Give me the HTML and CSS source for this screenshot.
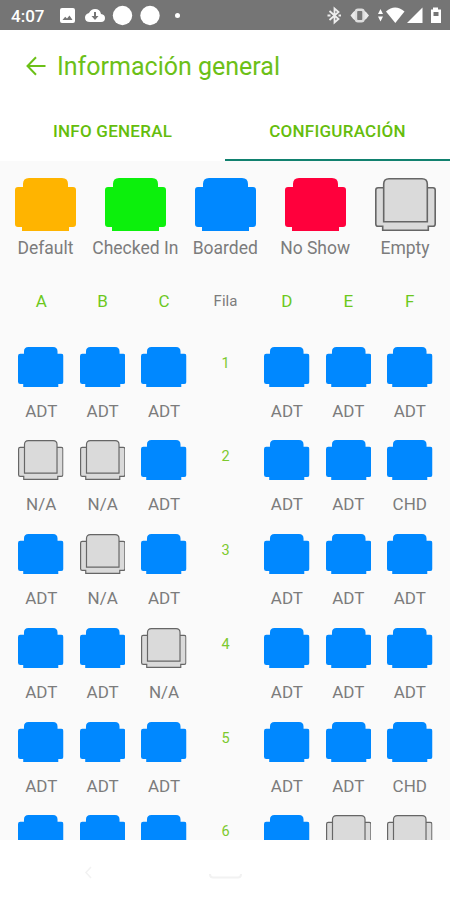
FILE: index.html
```
<!DOCTYPE html>
<html lang="es">
<head>
<meta charset="utf-8">
<title>Información general</title>
<link rel="stylesheet" href="styles.css">
</head>
<body>
<svg class="defs" aria-hidden="true">
  <symbol id="seat" viewBox="0 0 61 53" preserveAspectRatio="none">
    <path fill="currentColor" d="M8 9V6Q8 0 14 0H47Q53 0 53 6V9H58Q61 9 61 12V46Q61 49 58 49H54V53H7V49H3Q0 49 0 46V12Q0 9 3 9Z"/>
  </symbol>
  <symbol id="empty" viewBox="0 0 61 53" preserveAspectRatio="none">
    <g fill="#dadada" stroke="#666" stroke-width="1.6">
      <path d="M8.700 9.700H3Q.8 9.700 .8 12V46Q.8 48.300 3 48.300H7.700V52.200H53.300V48.300H58Q60.200 48.300 60.200 46V12Q60.200 9.700 58 9.700H52.300"/>
      <path d="M8.700 6Q8.700 .8 14 .8H47Q52.300 .8 52.300 6V43.800H8.700Z"/>
    </g>
  </symbol>
</svg>
<header class="status">
  <span class="clock">4:07</span>
  <svg class="status-icons" viewBox="0 0 390 30">
    <g fill="#fff">
      <path fill-rule="evenodd" d="M2 8H13Q15 8 15 10V21Q15 23 13 23H2Q0 23 0 21V10Q0 8 2 8ZM2.500 20H12.500L9.500 15.500L7 18.500L5.200 16.800Z"/>
      <path fill-rule="evenodd" d="M30 22Q25 22 25 17.500Q25 14 29 13Q31 9 35 9Q40 9 41 14Q45 14.500 45 18Q45 22 41 22ZM34 12V16H31.500L35 20L38.500 16H36V12Z"/>
      <circle cx="62.500" cy="15.500" r="9.700"/><circle cx="90" cy="15.500" r="9.700"/><circle cx="117.500" cy="15.500" r="2.500"/>
      <path d="M290.500 15.500Q293 11.500 296 10V21Q293 19.500 290.500 15.500ZM303 10Q306.500 11.500 309 15.500Q306.500 19.500 303 21Z" opacity=".85"/>
      <path d="M318 14L320.500 9L323 14ZM318 16.500H323L320.500 21.500Z"/>
      <path d="M326 11.500Q335 3.500 344.500 11.500L335.300 23Z"/>
      <path d="M362.500 7.500V23H347Z"/>
      <path fill-rule="evenodd" d="M373 7.500H378V9.500H381V23H371V9.500H373ZM373.500 12V16H378.500V12Z"/>
    </g>
    <path d="M269.500 11L278.500 19L274.500 22.500V8.500L278.500 12L269.500 20M267.500 15.500H270.500M278.500 15.500H281" fill="none" stroke="#eee" stroke-width="1.800"/>
    <rect x="296" y="9.700" width="7.500" height="11.600" rx="2" fill="#777" stroke="#ddd" stroke-width="2.400"/>
  </svg>
</header>
<div class="title">
  <svg class="back" viewBox="0 0 20 20"><path d="M19.500 10H2M10 1.200L1.500 10L10 18.800" fill="none" stroke="currentColor" stroke-width="2"/></svg>
  <h1>Información general</h1>
</div>
<nav class="tabs"><span class="tab">INFO GENERAL</span><span class="tab active">CONFIGURACIÓN</span></nav>
<main class="content">
  <section class="legend">
    <div class="key default"><svg><use href="#seat"/></svg><span>Default</span></div>
    <div class="key checked"><svg><use href="#seat"/></svg><span>Checked In</span></div>
    <div class="key boarded"><svg><use href="#seat"/></svg><span>Boarded</span></div>
    <div class="key noshow"><svg><use href="#seat"/></svg><span>No Show</span></div>
    <div class="key"><svg><use href="#empty"/></svg><span>Empty</span></div>
  </section>
  <section class="row heads"><b>A</b><b>B</b><b>C</b><span>Fila</span><b>D</b><b>E</b><b>F</b></section>
  <section class="row">
    <div class="seat"><svg><use href="#seat"/></svg>ADT</div>
    <div class="seat"><svg><use href="#seat"/></svg>ADT</div>
    <div class="seat"><svg><use href="#seat"/></svg>ADT</div>
    <span class="num">1</span>
    <div class="seat"><svg><use href="#seat"/></svg>ADT</div>
    <div class="seat"><svg><use href="#seat"/></svg>ADT</div>
    <div class="seat"><svg><use href="#seat"/></svg>ADT</div>
  </section>
  <section class="row">
    <div class="seat"><svg><use href="#empty"/></svg>N/A</div>
    <div class="seat"><svg><use href="#empty"/></svg>N/A</div>
    <div class="seat"><svg><use href="#seat"/></svg>ADT</div>
    <span class="num">2</span>
    <div class="seat"><svg><use href="#seat"/></svg>ADT</div>
    <div class="seat"><svg><use href="#seat"/></svg>ADT</div>
    <div class="seat"><svg><use href="#seat"/></svg>CHD</div>
  </section>
  <section class="row">
    <div class="seat"><svg><use href="#seat"/></svg>ADT</div>
    <div class="seat"><svg><use href="#empty"/></svg>N/A</div>
    <div class="seat"><svg><use href="#seat"/></svg>ADT</div>
    <span class="num">3</span>
    <div class="seat"><svg><use href="#seat"/></svg>ADT</div>
    <div class="seat"><svg><use href="#seat"/></svg>ADT</div>
    <div class="seat"><svg><use href="#seat"/></svg>ADT</div>
  </section>
  <section class="row">
    <div class="seat"><svg><use href="#seat"/></svg>ADT</div>
    <div class="seat"><svg><use href="#seat"/></svg>ADT</div>
    <div class="seat"><svg><use href="#empty"/></svg>N/A</div>
    <span class="num">4</span>
    <div class="seat"><svg><use href="#seat"/></svg>ADT</div>
    <div class="seat"><svg><use href="#seat"/></svg>ADT</div>
    <div class="seat"><svg><use href="#seat"/></svg>ADT</div>
  </section>
  <section class="row">
    <div class="seat"><svg><use href="#seat"/></svg>ADT</div>
    <div class="seat"><svg><use href="#seat"/></svg>ADT</div>
    <div class="seat"><svg><use href="#seat"/></svg>ADT</div>
    <span class="num">5</span>
    <div class="seat"><svg><use href="#seat"/></svg>ADT</div>
    <div class="seat"><svg><use href="#seat"/></svg>ADT</div>
    <div class="seat"><svg><use href="#seat"/></svg>CHD</div>
  </section>
  <section class="row">
    <div class="seat"><svg><use href="#seat"/></svg></div>
    <div class="seat"><svg><use href="#seat"/></svg></div>
    <div class="seat"><svg><use href="#seat"/></svg></div>
    <span class="num">6</span>
    <div class="seat"><svg><use href="#seat"/></svg></div>
    <div class="seat"><svg><use href="#empty"/></svg></div>
    <div class="seat"><svg><use href="#empty"/></svg></div>
  </section>
</main>
<footer class="navbar">
  <svg viewBox="0 0 450 60" fill="none" stroke="#f2f2f2"><path d="M91 27L86 32.500L91 38" stroke-width="1.500"/><path d="M210 34Q210 37.500 213 37.500H238Q241 37.500 241 34" stroke-width="2"/></svg>
</footer>
</body>
</html>
```
FILE: styles.css
```
* { box-sizing: border-box; }
body {
  margin: 0;
  width: 450px;
  height: 900px;
  display: flex;
  flex-direction: column;
  overflow: hidden;
  background: #fff;
  font-family: Roboto, sans-serif;
  color: #7c7c7c;
}
.defs { display: none; }
.status {
  height: 30px;
  flex: none;
  display: flex;
  align-items: center;
  padding-left: 11px;
  background: #757575;
  color: #fff;
}
.clock { width: 49px; font-size: 17px; font-weight: 500; line-height: 30px; padding-top: 1px; }
.status-icons { width: 390px; height: 30px; flex: none; }
.title {
  height: 72px;
  flex: none;
  display: flex;
  align-items: center;
  padding: 2px 0 0 26px;
  color: #6cc017;
}
.back { width: 20px; height: 20px; margin: -3px 11px 0 0; }
h1 { margin: 0; font-size: 25px; font-weight: 400; line-height: 30px; white-space: nowrap; }
.tabs { height: 59px; flex: none; display: flex; }
.tab {
  flex: 1;
  text-align: center;
  line-height: 58px;
  font-size: 17px;
  font-weight: 500;
  letter-spacing: .25px;
  color: #65bd0c;
}
.active { height: 58.5px; border-bottom: 2px solid #11816f; }
.content { height: 679px; flex: none; overflow: hidden; background: #fafafa; }
.legend { display: grid; grid-template-columns: repeat(5, 1fr); height: 121px; padding: 17px 0 0 .5px; }
.key { display: flex; flex-direction: column; align-items: center; white-space: nowrap; }
.key svg { width: 61px; height: 53px; }
.key span { font-size: 17.5px; line-height: 24px; margin-top: 5px; }
.default svg { color: #ffb400; }
.checked svg { color: #0cf00c; }
.boarded svg, .seat svg { color: #0088ff; }
.noshow svg { color: #ff003c; }
.row { display: grid; grid-template-columns: repeat(7, 1fr); height: 93.75px; padding: 0 9.5px 0 10.5px; text-align: center; }
.heads { height: 64.5px; line-height: 38px; font-size: 15px; }
.heads b { font-size: 17px; font-weight: 400; color: #6cc81c; }
.seat { font-size: 17px; line-height: 24px; display: flex; flex-direction: column; align-items: center; }
.seat svg { width: 45.5px; height: 40px; margin-bottom: 12px; }
.num { font-size: 14.5px; line-height: 33px; height: 33px; color: #7cc92e; }
.navbar { height: 60px; flex: none; }
.navbar svg { display: block; width: 450px; height: 60px; }
```
